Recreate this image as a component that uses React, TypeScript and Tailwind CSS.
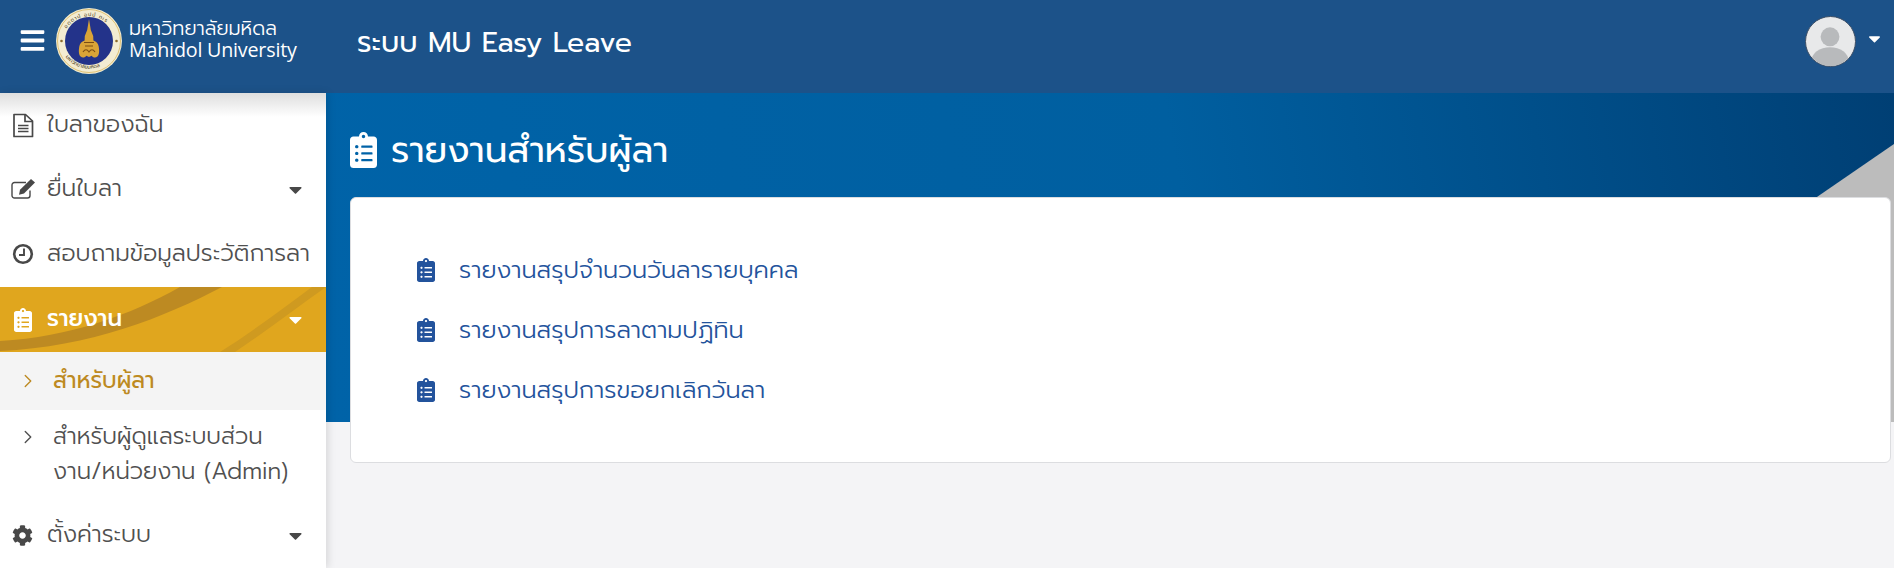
import { FaBars, FaCaretDown, FaClipboardList, FaCog } from "react-icons/fa";
import { FiChevronRight } from "react-icons/fi";

const thai = "font-['Prompt','Kanit','Noto_Sans_Thai','Noto_Sans',sans-serif]";

function Logo() {
  return (
    <svg viewBox="0 0 66 66" className="w-[66px] h-[66px] shrink-0">
      <circle cx="33" cy="33" r="33" fill="#f3ecd2" />
      <circle cx="33" cy="33" r="31.500" fill="none" stroke="#d9b65c" strokeWidth="0.800" />
      <circle cx="33" cy="33" r="24" fill="#23338a" />
      <path d="M33 11l1.800 11 2.400 6 .2 4.500c3 1 4.800 3 5.300 6 .7 4 .8 8-1.300 10-2 1.800-4.500 1-5.800-.8L33 49l-2.600-1.300c-1.300 1.800-3.800 2.600-5.800.8-2.100-2-2-6-1.300-10 .5-3 2.300-5 5.300-6l.2-4.500 2.400-6z" fill="#d9a437" />
      <path d="M28 34.500h10M29 38h8M27 44c2-3 4-3 6 0 2-3 4-3 6 0" fill="none" stroke="#7a4d12" strokeWidth="1.100" />
      <circle cx="5.500" cy="33" r="1.300" fill="#8a6a2c" />
      <circle cx="60.500" cy="33" r="1.300" fill="#8a6a2c" />
      <path id="sealTop" d="M6.500 30a27 27 0 0 1 53 0" fill="none" />
      <path id="sealBottom" d="M4.500 37a29 29 0 0 0 57 0" fill="none" />
      <text fontSize="5" fill="#4a3a18" fontFamily="Prompt, sans-serif" letterSpacing="0.800">
        <textPath href="#sealTop" startOffset="14%">อตฺตานํ อุปมํ กเร</textPath>
      </text>
      <text fontSize="5" fill="#4a3a18" fontFamily="Prompt, sans-serif">
        <textPath href="#sealBottom" startOffset="16%">มหาวิทยาลัยมหิดล</textPath>
      </text>
    </svg>
  );
}

function FileIcon() {
  return (
    <svg viewBox="0 0 22 25" className="w-[22px] h-[25px]" fill="none" stroke="currentColor" strokeWidth="1.700">
      <path d="M2 1.500h11.500L20.500 8v15.500H2z" strokeLinejoin="round" />
      <path d="M13 1.500V8.500h7.500M6 12.500h10.500M6 15.500h10.500M6 18.500h10.500" />
    </svg>
  );
}

function EditIcon() {
  return (
    <svg viewBox="0 0 24 20" className="w-[24px] h-[20px] -ml-[1px]">
      <path d="M19 11.500v5a2.500 2.500 0 0 1-2.500 2.500H3.500A2.500 2.500 0 0 1 1 16.500V6a2.500 2.500 0 0 1 2.500-2.500H15" fill="none" stroke="currentColor" strokeWidth="1.400" />
      <path d="M20 0l4 3.500L13 14.500l-5 1.200 1-5z" fill="currentColor" />
    </svg>
  );
}

function ClockIcon() {
  return (
    <svg viewBox="0 0 22 22" className="w-[22px] h-[22px]" fill="none" stroke="currentColor">
      <circle cx="11" cy="11" r="8.800" strokeWidth="2.600" />
      <path d="M12 5.500V12H7" strokeWidth="1.900" />
    </svg>
  );
}

function Header() {
  return (
    <header className="h-[93px] bg-[#1c5289] flex items-start pl-[19px] pr-[10px] text-white">
      <FaBars className="w-[27px] h-[27px] mt-[27px] shrink-0" />
      <div className="ml-[10px] mt-[8px]">
        <Logo />
      </div>
      <div className="ml-[7px] mt-[18px] w-[170px] leading-[21px]">
        <div className={`text-[19.5px] font-light ${thai}`}>มหาวิทยาลัยมหิดล</div>
        <div className="text-[19.7px] font-['Open_Sans',sans-serif] whitespace-nowrap tracking-[-0.2px]">Mahidol University</div>
      </div>
      <div className={`ml-[58px] mt-[25px] text-[28.4px] leading-[36px] ${thai}`}>ระบบ MU Easy Leave</div>
      <div className="ml-auto mt-[16px] flex items-start">
        <div className="w-[51px] h-[51px] rounded-full border border-[#3d4f66] bg-[#e8e9ea] overflow-hidden">
          <svg viewBox="0 0 52 52" className="w-full h-full">
            <circle cx="25.500" cy="21" r="10" fill="#b8babc" />
            <ellipse cx="25.500" cy="47" rx="20" ry="15" fill="#b8babc" />
          </svg>
        </div>
        <FaCaretDown className="w-[19px] h-[19px] ml-[9px] mt-[13px]" />
      </div>
    </header>
  );
}

function NavItem({
  icon,
  label,
  caret,
  className,
}: {
  icon: React.ReactNode;
  label: string;
  caret?: boolean;
  className: string;
}) {
  return (
    <div className={`flex items-center pl-[12px] pr-[20px] text-[#505050] ${className}`}>
      <span className="w-[35px] shrink-0 text-[#484848]">{icon}</span>
      <span className="flex-1 whitespace-nowrap">{label}</span>
      {caret && <FaCaretDown className="w-[21px] h-[21px] text-[#484848]" />}
    </div>
  );
}

function Sidebar() {
  return (
    <aside className={`relative z-10 w-[326px] shrink-0 bg-white shadow-[2px_0_8px_rgba(0,0,0,0.12)] text-[23.5px] font-light ${thai}`}>
      <div className="absolute inset-x-0 top-0 h-[24px] bg-gradient-to-b from-[#dedede] to-white" />
      <div className="relative">
        <NavItem className="h-[64px]" icon={<FileIcon />} label="ใบลาของฉัน" />
        <NavItem className="h-[64px]" caret icon={<EditIcon />} label="ยื่นใบลา" />
        <NavItem className="h-[66px]" icon={<ClockIcon />} label="สอบถามข้อมูลประวัติการลา" />
      </div>
      <div className="relative h-[65px] bg-[#e0a61e] overflow-hidden text-white text-[23px] font-medium flex items-center pl-[13px] pr-[20px]">
        <svg viewBox="0 0 326 65" preserveAspectRatio="none" className="absolute inset-0 w-full h-full">
          <path d="M0 64C90 60 165 30 222 0H180C130 28 70 50 0 54Z" fill="#bd8a22" />
          <path d="M235 65C265 45 295 22 326 0H312C280 24 250 46 220 65Z" fill="#cf9a20" />
        </svg>
        <FaClipboardList className="relative w-[20px] h-[24px] shrink-0" />
        <span className="relative ml-[14px] flex-1">รายงาน</span>
        <FaCaretDown className="relative w-[21px] h-[21px]" />
      </div>
      <div className="h-[58px] bg-[#f4f4f4] flex items-center pl-[17px] text-[#bd8a22] text-[22.7px] font-normal">
        <FiChevronRight strokeWidth={1.5} className="w-[22px] h-[22px] shrink-0" />
        <span className="ml-[14px]">สำหรับผู้ลา</span>
      </div>
      <div className="flex items-start pl-[17px] pr-[20px] pt-[9px] pb-[14px] text-[#505050] text-[23px] leading-[35px]">
        <FiChevronRight strokeWidth={1.5} className="w-[22px] h-[22px] shrink-0 mt-[7px]" />
        <span className="ml-[14px] whitespace-nowrap">
          สำหรับผู้ดูแลระบบส่วน
          <br />
          งาน/หน่วยงาน (Admin)
        </span>
      </div>
      <NavItem className="h-[64px]" caret icon={<FaCog className="w-[21px] h-[21px]" />} label="ตั้งค่าระบบ" />
    </aside>
  );
}

const reports = [
  "รายงานสรุปจำนวนวันลารายบุคคล",
  "รายงานสรุปการลาตามปฏิทิน",
  "รายงานสรุปการขอยกเลิกวันลา",
];

function Main() {
  return (
    <main className="relative flex-1 bg-[#f4f4f6] overflow-hidden">
      {/* blue banner behind the title and the card */}
      <div className="absolute inset-x-0 top-0 h-[329px] bg-[linear-gradient(80deg,#0063a8_0%,#005fa0_55%,#003f74_100%)]">
        <div
          className="absolute inset-0 bg-[#bcbcbc]"
          style={{ clipPath: "polygon(100% 51px, 100% 100%, 1164px 100%)" }}
        />
      </div>
      <div className={`relative pl-[24px] pr-[3px] ${thai}`}>
        <div className="h-[104px] flex items-center text-white pt-[10px]">
          <FaClipboardList className="w-[27px] h-[36px] shrink-0" />
          <h1 className="ml-[14px] text-[36px] leading-[44px] font-normal">รายงานสำหรับผู้ลา</h1>
        </div>
        <div className="h-[266px] bg-white rounded-[6px] border border-[#dcdde0] pt-[42px] pl-[66px]">
          {reports.map((r) => (
            <div key={r} className="h-[60px] flex items-center text-[#23539c] text-[24.2px] font-light">
              <FaClipboardList className="w-[18px] h-[24px] shrink-0" />
              <span className="ml-[24px]">{r}</span>
            </div>
          ))}
        </div>
      </div>
    </main>
  );
}

export default function App() {
  return (
    <div className="h-[568px] overflow-hidden flex flex-col bg-white">
      <Header />
      <div className="flex flex-1 min-h-0">
        <Sidebar />
        <Main />
      </div>
    </div>
  );
}
